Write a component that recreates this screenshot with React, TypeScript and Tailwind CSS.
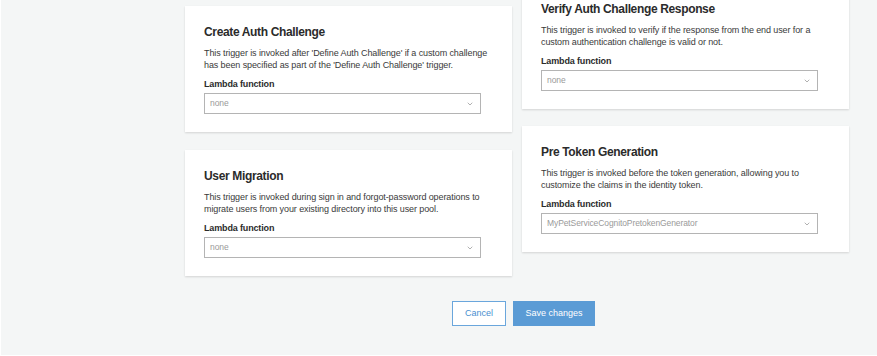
import { ChevronDown } from 'lucide-react'

interface TriggerCardProps {
  title: string
  description: string
  value: string
}

function TriggerCard({ title, description, value }: TriggerCardProps) {
  return (
    <div className="w-[327px] h-[126px] bg-white pl-[19px] pr-[12px] pt-[18px] shadow-[0_1px_2px_rgba(0,0,0,0.14)]">
      <h3 className="text-[12px] leading-[16px] font-bold tracking-[-0.35px] text-[#2b2b2b]">{title}</h3>
      <p className="mt-[7px] w-[288px] text-[9px] leading-[12px] tracking-[-0.1px] text-[#3a3a3a]">{description}</p>
      <p className="mt-[6px] text-[9px] leading-[14px] font-bold tracking-[-0.15px] text-[#2b2b2b]">Lambda function</p>
      <div className="mt-[2px] w-[277px] h-[21px] border border-[#b4b4b4] flex items-center justify-between pl-[5px] pr-[6px]">
        <span className="text-[8.5px] tracking-[-0.1px] text-[#9a9a9a]">{value}</span>
        <ChevronDown className="w-[8px] h-[8px] text-[#8a8a8a]" strokeWidth={2} />
      </div>
    </div>
  )
}

export default function App() {
  return (
    <div
      className="w-[877px] h-[356px] overflow-hidden bg-[#f4f6f6] border-l border-b border-white"
      style={{ fontFamily: '"Liberation Sans", Arial, sans-serif' }}
    >
      <div className="ml-[184px] pt-[6px] flex items-start gap-[10px]">
        {/* Left column */}
        <div className="flex flex-col gap-[18px]">
          <TriggerCard
            title="Create Auth Challenge"
            description="This trigger is invoked after 'Define Auth Challenge' if a custom challenge has been specified as part of the 'Define Auth Challenge' trigger."
            value="none"
          />
          <TriggerCard
            title="User Migration"
            description="This trigger is invoked during sign in and forgot-password operations to migrate users from your existing directory into this user pool."
            value="none"
          />
        </div>

        {/* Right column */}
        <div className="flex flex-col gap-[17px] -mt-[23px]">
          <TriggerCard
            title="Verify Auth Challenge Response"
            description="This trigger is invoked to verify if the response from the end user for a custom authentication challenge is valid or not."
            value="none"
          />
          <TriggerCard
            title="Pre Token Generation"
            description="This trigger is invoked before the token generation, allowing you to customize the claims in the identity token."
            value="MyPetServiceCognitoPretokenGenerator"
          />
        </div>
      </div>

      {/* Actions */}
      <div className="mt-[25px] ml-[451px] flex gap-[7px]">
        <button className="w-[54px] h-[25px] bg-white border border-[#6aa6dc] text-[#4a8fd0] text-[9px]">
          Cancel
        </button>
        <button className="w-[82px] h-[25px] bg-[#5a9bd5] text-white text-[9px]">
          Save changes
        </button>
      </div>
    </div>
  )
}
